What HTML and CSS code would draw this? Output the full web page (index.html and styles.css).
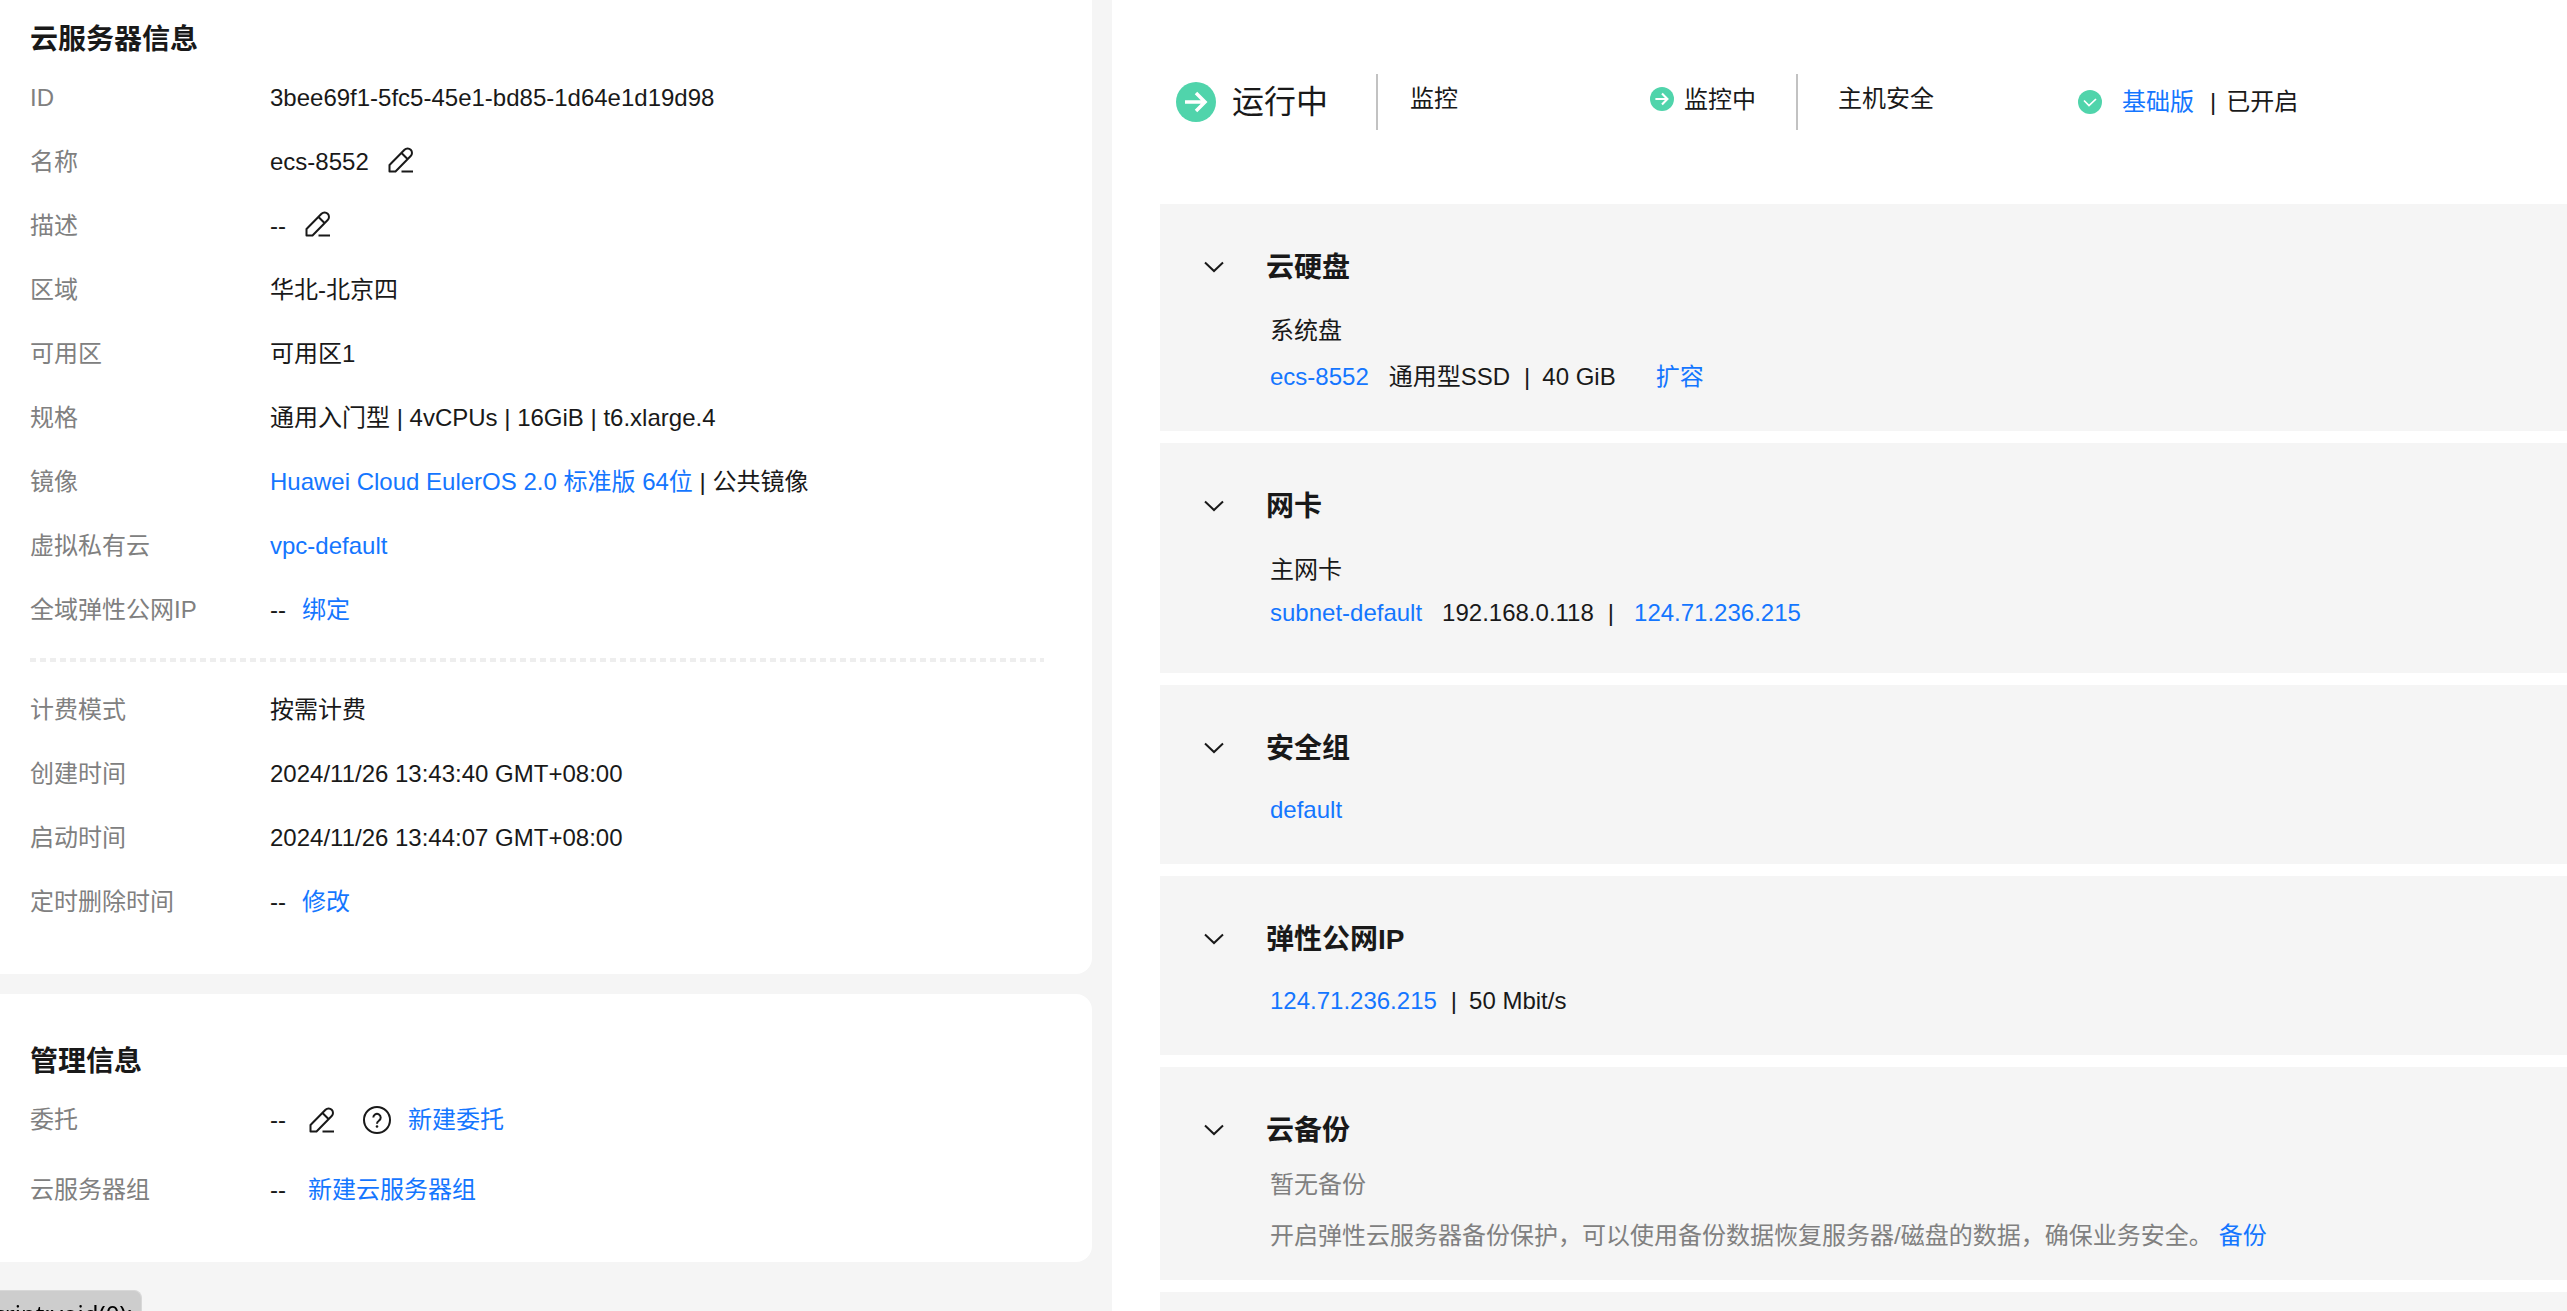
FILE: index.html
```html
<!DOCTYPE html>
<html lang="zh-CN">
<head>
<meta charset="utf-8">
<title>云服务器信息</title>
<link rel="stylesheet" href="styles.css">
</head>
<body>
<svg class="defs" width="0" height="0" aria-hidden="true">
  <symbol id="edit" viewBox="0 0 28 28"><path d="M2.500 25.500V19L17.500 3.800a4.200 4.200 0 0 1 6.200 6.200L8.500 25.500ZM14.500 7l6 6M14.500 25.500h11.500" fill="none" stroke="currentColor" stroke-width="2" stroke-linejoin="round"/></symbol>
  <symbol id="help" viewBox="0 0 30 30"><circle cx="15" cy="15" r="13" fill="none" stroke="currentColor" stroke-width="2"/><path d="M11.300 12.500a3.700 3.700 0 1 1 5.600 3.200c-1.400 1-1.900 1.500-1.900 3" fill="none" stroke="currentColor" stroke-width="2"/><circle cx="15" cy="21.500" r="1.300" fill="currentColor"/></symbol>
  <symbol id="run" viewBox="0 0 40 40"><circle cx="20" cy="20" r="20" fill="#50d4ab"/><path d="M9 20h20M20 11l9 9-9 9" fill="none" stroke="#fff" stroke-width="3.500"/></symbol>
  <symbol id="ok" viewBox="0 0 24 24"><circle cx="12" cy="12" r="12" fill="#50d4ab"/><path d="M6 10.500l5 5 7-6.500" fill="none" stroke="#fff" stroke-width="1.700"/></symbol>
  <symbol id="chevron" viewBox="0 0 20 12"><path d="M1 1.500l9 8.500 9-8.500" fill="none" stroke="currentColor" stroke-width="2"/></symbol>
</svg>
<div class="page">
  <aside class="side">
    <section class="card card-first">
      <h2>云服务器信息</h2>
      <dl>
        <div class="row"><dt>ID</dt><dd>3bee69f1-5fc5-45e1-bd85-1d64e1d19d98</dd></div>
        <div class="row"><dt>名称</dt><dd>ecs-8552<button class="edit" aria-label="编辑名称"><svg><use href="#edit"/></svg></button></dd></div>
        <div class="row"><dt>描述</dt><dd>--<button class="edit" aria-label="编辑描述"><svg><use href="#edit"/></svg></button></dd></div>
        <div class="row"><dt>区域</dt><dd>华北-北京四</dd></div>
        <div class="row"><dt>可用区</dt><dd>可用区1</dd></div>
        <div class="row"><dt>规格</dt><dd>通用入门型 | 4vCPUs | 16GiB | t6.xlarge.4</dd></div>
        <div class="row"><dt>镜像</dt><dd><a href="#">Huawei Cloud EulerOS 2.0 标准版 64位</a>&nbsp;| 公共镜像</dd></div>
        <div class="row"><dt>虚拟私有云</dt><dd><a href="#">vpc-default</a></dd></div>
        <div class="row"><dt>全域弹性公网IP</dt><dd>--<a class="after" href="#">绑定</a></dd></div>
      </dl>
      <hr>
      <dl>
        <div class="row"><dt>计费模式</dt><dd>按需计费</dd></div>
        <div class="row"><dt>创建时间</dt><dd>2024/11/26 13:43:40 GMT+08:00</dd></div>
        <div class="row"><dt>启动时间</dt><dd>2024/11/26 13:44:07 GMT+08:00</dd></div>
        <div class="row"><dt>定时删除时间</dt><dd>--<a class="after" href="#">修改</a></dd></div>
      </dl>
    </section>
    <section class="card card-manage">
      <h2>管理信息</h2>
      <dl class="loose">
        <div class="row"><dt>委托</dt><dd class="spaced">--<button class="edit" aria-label="编辑委托"><svg><use href="#edit"/></svg></button><button class="help" aria-label="帮助"><svg><use href="#help"/></svg></button><a class="after" href="#">新建委托</a></dd></div>
        <div class="row"><dt>云服务器组</dt><dd class="spaced">--<a class="group" href="#">新建云服务器组</a></dd></div>
      </dl>
    </section>
  </aside>
  <main class="main">
    <header class="status">
      <div class="state"><svg><use href="#run"/></svg><strong>运行中</strong></div>
      <div class="metric monitor"><span>监控</span><span class="value"><svg><use href="#run"/></svg>监控中</span></div>
      <div class="metric security"><span>主机安全</span><span class="value"><svg><use href="#ok"/></svg><a href="#">基础版</a><span class="bar">|</span>已开启</span></div>
    </header>
    <section class="panel">
      <button class="toggle" aria-label="收起云硬盘"><svg><use href="#chevron"/></svg></button>
      <h3>云硬盘</h3>
      <div class="body disk"><p>系统盘</p><p><a href="#">ecs-8552</a><span class="item">通用型SSD</span><span class="bar">|</span>40 GiB<a class="action" href="#">扩容</a></p></div>
    </section>
    <section class="panel">
      <button class="toggle" aria-label="收起网卡"><svg><use href="#chevron"/></svg></button>
      <h3>网卡</h3>
      <div class="body nic"><p>主网卡</p><p><a href="#">subnet-default</a><span class="item">192.168.0.118</span><span class="bar">|</span><a class="ip" href="#">124.71.236.215</a></p></div>
    </section>
    <section class="panel">
      <button class="toggle" aria-label="收起安全组"><svg><use href="#chevron"/></svg></button>
      <h3>安全组</h3>
      <div class="body single"><p><a href="#">default</a></p></div>
    </section>
    <section class="panel">
      <button class="toggle" aria-label="收起弹性公网IP"><svg><use href="#chevron"/></svg></button>
      <h3>弹性公网IP</h3>
      <div class="body single"><p><a href="#">124.71.236.215</a><span class="bar">|</span>50 Mbit/s</p></div>
    </section>
    <section class="panel">
      <button class="toggle" aria-label="收起云备份"><svg><use href="#chevron"/></svg></button>
      <h3>云备份</h3>
      <div class="body backup"><p>暂无备份</p><p>开启弹性云服务器备份保护，可以使用备份数据恢复服务器/磁盘的数据，确保业务安全。<a href="#">备份</a></p></div>
    </section>
    <section class="panel panel-rest"></section>
  </main>
</div>
<div class="link-status">javascript:void(0);</div>
</body>
</html>
```
FILE: styles.css
```css
* { box-sizing: border-box; }
body {
  margin: 0;
  height: 100vh;
  overflow: hidden;
  background: #f5f5f5;
  color: #191919;
  font: 24px/36px "Liberation Sans", "Noto Sans CJK SC", sans-serif;
}
h2, h3, p, dl, dt, dd { margin: 0; }
h2, h3 { font-size: 28px; font-weight: 700; }
a { color: #1476ff; text-decoration: none; }
button { display: inline-flex; padding: 0; border: 0; background: none; color: inherit; }
svg { display: block; flex: none; }
.defs { position: absolute; }
.page { display: grid; grid-template-columns: 1092fr 1455fr; gap: 20px; height: 100%; }

.card { padding: 14px 48px 40px 30px; background: #fff; border-radius: 0 16px 16px 0; }
.card-first { border-top-right-radius: 0; }
.card-manage { margin-top: 20px; padding-top: 42px; }
.card h2 { line-height: 52px; }
.row { display: grid; grid-template-columns: 240px 1fr; height: 64px; align-items: center; }
.row dt { color: #808080; }
.row dd { display: flex; align-items: center; white-space: pre; }
.loose { display: grid; gap: 6px; }
.edit { margin-left: 18px; padding-bottom: 4px; }
.edit svg { width: 28px; height: 28px; }
.spaced .edit { margin-left: 22px; padding-bottom: 0; }
.help { margin-left: 26px; }
.help svg { width: 30px; height: 30px; }
.after { margin-left: 16px; }
.group { margin-left: 22px; }
hr {
  height: 4px;
  margin: 16px 0;
  border: 0;
  background: repeating-linear-gradient(90deg, #eee 0 6px, transparent 6px 10px);
}

.main { padding-left: 48px; background: #fff; display: flex; flex-direction: column; gap: 12px; overflow: hidden; }
.status { flex: none; display: flex; align-items: center; height: 192px; padding: 12px 0 0 16px; }
.state { display: flex; align-items: center; gap: 16px; width: 200px; }
.state svg { width: 40px; height: 40px; }
.state strong { font-size: 32px; font-weight: 400; }
.metric { display: flex; align-items: center; height: 56px; border-left: 2px solid #c2c2c2; white-space: nowrap; }
.metric > span { padding-bottom: 6px; }
.value { display: flex; align-items: center; }
.value svg { width: 24px; height: 24px; }
.monitor { width: 420px; padding-left: 32px; }
.monitor .value { margin-left: 192px; padding-bottom: 4px; gap: 10px; }
.monitor .value svg { margin-bottom: 2px; }
.security { padding-left: 40px; }
.security .value { margin-left: 144px; padding-bottom: 0; }
.security a { margin-left: 20px; }
.security .bar { margin: 0 10px 0 16px; }

.panel { display: grid; grid-template-columns: 62px 1fr; padding: 44px 0 0 44px; background: #f5f5f5; flex: none; }
.panel h3 { line-height: 40px; }
.toggle { align-self: center; padding-bottom: 2px; }
.toggle svg { width: 20px; height: 12px; }
.body { grid-column: 2; padding-left: 4px; }
.body p { display: flex; }
.item { margin-left: 20px; }
.bar { margin: 0 12px 0 14px; }
.action { margin-left: 40px; }
.ip { margin-left: 8px; }
.disk { padding-top: 25px; padding-bottom: 36px; }
.disk p + p { margin-top: 10px; }
.nic { padding-top: 25px; padding-bottom: 42px; }
.nic p + p { margin-top: 7px; }
.single { padding-top: 23px; padding-bottom: 36px; }
.backup { padding-top: 16px; padding-bottom: 26px; color: #808080; }
.backup p + p { margin-top: 15px; }
.backup a { margin-left: 6px; }
.panel-rest { flex: 1 0 19px; padding: 0; }

.link-status {
  position: fixed;
  left: 0;
  top: calc(100vh - 21px);
  width: 142px;
  height: 40px;
  padding: 5px 8px 0 0;
  border: 1px solid #d8d8d8;
  border-left: 0;
  border-radius: 0 8px 0 0;
  background: #cdcdcd;
  color: #000;
  display: flex;
  justify-content: flex-end;
  white-space: nowrap;
  font-family: "Noto Sans", sans-serif;
}
```
